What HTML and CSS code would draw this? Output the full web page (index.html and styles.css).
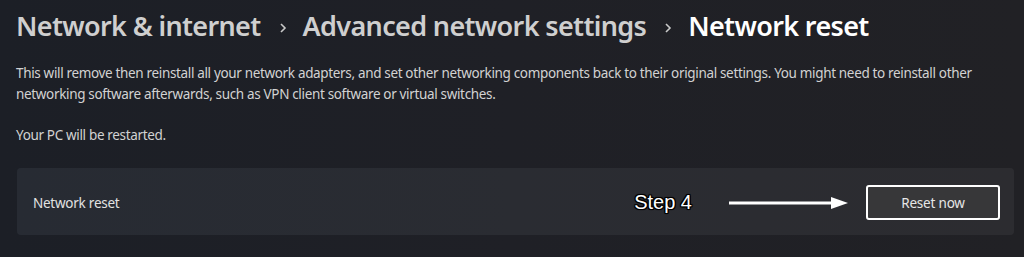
FILE: index.html
```html
<!DOCTYPE html>
<html>
<head>
<meta charset="utf-8">
<link rel="stylesheet" href="styles.css">
</head>
<body>
<div class="page">
  <h1 class="crumbs">
    <span class="crumb">Network &amp; internet</span>
    <svg class="chev" width="10" height="14" viewBox="0 0 10 14"><path d="M3 3 L7 7 L3 11" fill="none" stroke="#c9c9c9" stroke-width="1.6"/></svg>
    <span class="crumb">Advanced network settings</span>
    <svg class="chev" width="10" height="14" viewBox="0 0 10 14"><path d="M3 3 L7 7 L3 11" fill="none" stroke="#c9c9c9" stroke-width="1.6"/></svg>
    <span class="crumb current">Network reset</span>
  </h1>
  <p class="desc">This will remove then reinstall all your network adapters, and set other networking components back to their original settings. You might need to reinstall other networking software afterwards, such as VPN client software or virtual switches.</p>
  <p class="desc restart">Your PC will be restarted.</p>
  <div class="card">
    <span class="card-label">Network reset</span>
    <div class="card-right">
      <span class="step">Step 4</span>
      <svg class="arrow" width="120" height="14" viewBox="0 0 120 14"><line x1="0" y1="7" x2="104" y2="7" stroke="#fff" stroke-width="3"/><polygon points="102,1 119,7 102,13" fill="#fff"/></svg>
      <button class="btn">Reset now</button>
    </div>
  </div>
</div>
</body>
</html>
```
FILE: styles.css
```css
html, body {
  margin: 0;
  padding: 0;
}
body {
  width: 1024px;
  height: 257px;
  overflow: hidden;
  background: linear-gradient(90deg, #1c1f26 0%, #1f2026 50%, #212125 100%);
  font-family: "Noto Sans", "Open Sans", sans-serif;
  color: #d4d4d4;
}
.page {
  padding: 8px 10px 0 16px;
}
.crumbs {
  margin: 0;
  display: flex;
  align-items: center;
  font-size: 27px;
  font-weight: 600;
  line-height: 36px;
  color: #cfcfcf;
  letter-spacing: -0.65px;
}
.chev {
  margin: 3px 15px 0 17px;
}
.crumb.current {
  color: #ffffff;
}
.desc {
  margin: 19px 0 0 0;
  font-size: 13.5px;
  line-height: 21px;
  color: #d2d2d2;
  letter-spacing: -0.34px;
  max-width: 1000px;
}
.desc.restart {
  margin-top: 20px;
}
.card {
  margin: 22px 0 0 1px;
  width: 997px;
  height: 67px;
  box-sizing: border-box;
  border-radius: 4px;
  background: linear-gradient(90deg, #272b33 0%, #2a2c32 50%, #2c2c30 100%);
  display: flex;
  align-items: center;
  justify-content: space-between;
  padding: 2px 14px 0 16px;
}
.card-label {
  font-size: 13.5px;
  color: #e2e2e2;
  letter-spacing: -0.25px;
}
.card-right {
  display: flex;
  align-items: center;
}
.step {
  font-family: "Liberation Sans", Arial, sans-serif;
  font-size: 20px;
  color: #fff;
  text-shadow: -1px -1px 0 #000, 1px -1px 0 #000, -1px 1px 0 #000, 1px 1px 0 #000, 0 1px 1px #000, 0 -1px 1px #000, 1px 0 1px #000, -1px 0 1px #000;
  margin-right: 37px;
}
.arrow {
  margin-right: 17px;
}
.btn {
  width: 134px;
  height: 35px;
  box-sizing: border-box;
  border: 2px solid #ffffff;
  border-radius: 3px;
  background: #373739;
  color: #e6e6e6;
  font-family: "Noto Sans", "Open Sans", sans-serif;
  font-size: 13.5px;
  letter-spacing: -0.2px;
  padding: 0;
}
```
